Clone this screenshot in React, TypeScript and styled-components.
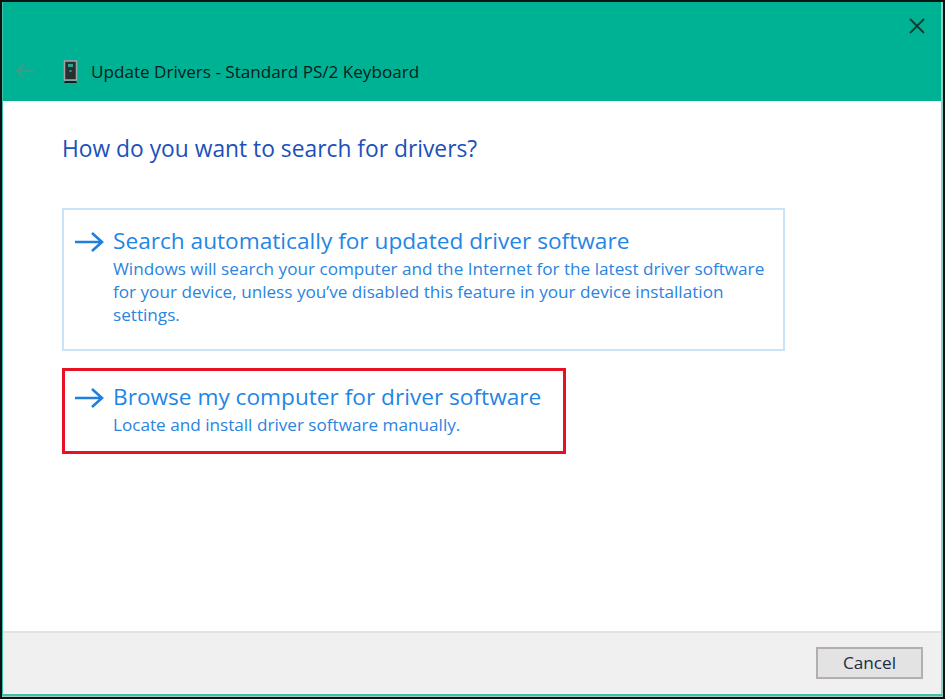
import React from 'react'
import styled, { createGlobalStyle } from 'styled-components'

const GlobalStyle = createGlobalStyle`
  html, body {
    margin: 0;
    padding: 0;
    background: #fff;
  }
  body {
    font-family: "Open Sans", "Noto Sans", sans-serif;
  }
`

const Frame = styled.div`
  width: 945px;
  height: 699px;
  box-sizing: border-box;
  border: 2px solid #0c1412;
  padding-bottom: 1px;
  background: #a9c7c1;
  overflow: hidden;
`

const Window = styled.div`
  height: 100%;
  box-sizing: border-box;
  border-left: 1px solid #3cc0aa;
  border-right: 2px solid #8fcfc3;
  border-bottom: 2px solid #3cc0aa;
  display: flex;
  flex-direction: column;
`

const Header = styled.header`
  height: 99px;
  flex: none;
  background: #00b294;
  position: relative;
  display: flex;
  align-items: flex-end;
  padding: 0 0 17px 12px;
  box-sizing: border-box;
`

const HeaderTitle = styled.span`
  font-size: 17.1px;
  line-height: 24px;
  color: #04201c;
  margin-left: 13px;
`

const BackIcon = styled.svg`
  width: 20px;
  height: 18px;
  margin-right: 28px;
  margin-bottom: 4px;
`

const DeviceIcon = styled.svg`
  width: 15px;
  height: 24px;
`

const CloseIcon = styled.svg`
  position: absolute;
  top: 15px;
  right: 15px;
  width: 18px;
  height: 18px;
`

const Content = styled.main`
  flex: 1;
  background: #fff;
  padding: 33px 0 0 59px;
  display: flex;
  flex-direction: column;
`

const Heading = styled.h1`
  margin: 0 0 44px;
  font-size: 22.8px;
  line-height: 30px;
  font-weight: 400;
  color: #1c50ba;
`

const Option = styled.div<{ $highlight?: boolean }>`
  box-sizing: border-box;
  flex: none;
  width: ${p => (p.$highlight ? '504px' : '723px')};
  height: ${p => (p.$highlight ? '86px' : '143px')};
  margin-bottom: ${p => (p.$highlight ? '0' : '17px')};
  border: ${p => (p.$highlight ? '3px solid #e81123' : '2px solid #c9e3fa')};
  padding: ${p => (p.$highlight ? '10px 0 0 10px' : '15px 0 0 11px')};
  display: flex;
  align-items: flex-start;
`

const ArrowIcon = styled.svg`
  width: 29px;
  height: 22px;
  flex: none;
  margin-top: 6px;
`

const OptionBody = styled.div`
  margin-left: 9px;
`

const OptionTitle = styled.div`
  font-size: 22.65px;
  line-height: 32px;
  color: #1f86e6;
`

const OptionText = styled.div`
  font-size: 17.15px;
  line-height: 23px;
  color: #2a84e0;
  width: 670px;
`

const Footer = styled.footer`
  flex: none;
  height: 63px;
  box-sizing: border-box;
  background: #f0f0f0;
  border-top: 2px solid #e2e2e2;
  display: flex;
  justify-content: flex-end;
  align-items: flex-start;
  padding: 14px 18px 0 0;
`

const CancelButton = styled.button`
  width: 107px;
  height: 32px;
  box-sizing: border-box;
  background: #e3e3e3;
  border: 2px solid #b5aeae;
  font-family: inherit;
  font-size: 17.2px;
  line-height: 24px;
  color: #1c2a44;
  padding: 0;
`

const Arrow = () => (
  <ArrowIcon viewBox="0 0 29 22" fill="none" stroke="#1f7fdc" strokeWidth="2.6">
    <path d="M0 11h27M17 2l10 9-10 9" />
  </ArrowIcon>
)

export default function App() {
  return (
    <>
      <GlobalStyle />
      <Frame>
        <Window>
          <Header>
            <BackIcon viewBox="0 0 20 18" fill="none" stroke="#3b9c8b" strokeWidth="2">
              <path d="M19 9H2M9 2 2 9l7 7" />
            </BackIcon>
            <DeviceIcon viewBox="0 0 15 24">
              <rect x="1.5" y="1" width="12" height="19" fill="#26302f" stroke="#a8a0a8" strokeWidth="1.5" />
              <rect x="5" y="4" width="5" height="3" fill="#2fa08c" />
              <rect x="6.5" y="10" width="2" height="2" fill="#2fa08c" />
              <path d="M2 21h11l1 2H1z" fill="#14201e" />
            </DeviceIcon>
            <HeaderTitle>Update Drivers - Standard PS/2 Keyboard</HeaderTitle>
            <CloseIcon viewBox="0 0 18 18" stroke="#0b3a33" strokeWidth="1.8">
              <path d="M2 2l14 14M16 2 2 16" />
            </CloseIcon>
          </Header>
          <Content>
            <Heading>How do you want to search for drivers?</Heading>
            <Option>
              <Arrow />
              <OptionBody>
                <OptionTitle>Search automatically for updated driver software</OptionTitle>
                <OptionText>
                  Windows will search your computer and the Internet for the latest driver software
                  for your device, unless you’ve disabled this feature in your device installation
                  settings.
                </OptionText>
              </OptionBody>
            </Option>
            <Option $highlight>
              <Arrow />
              <OptionBody>
                <OptionTitle>Browse my computer for driver software</OptionTitle>
                <OptionText>Locate and install driver software manually.</OptionText>
              </OptionBody>
            </Option>
          </Content>
          <Footer>
            <CancelButton>Cancel</CancelButton>
          </Footer>
        </Window>
      </Frame>
    </>
  )
}
